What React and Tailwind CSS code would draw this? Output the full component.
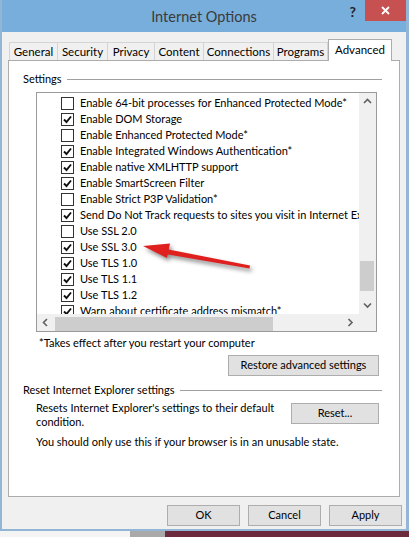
import React from 'react'

const rows = [
  [false, 'Enable 64-bit processes for Enhanced Protected Mode*'],
  [true, 'Enable DOM Storage'],
  [false, 'Enable Enhanced Protected Mode*'],
  [true, 'Enable Integrated Windows Authentication*'],
  [true, 'Enable native XMLHTTP support'],
  [true, 'Enable SmartScreen Filter'],
  [false, 'Enable Strict P3P Validation*'],
  [true, 'Send Do Not Track requests to sites you visit in Internet Explorer*'],
  [false, 'Use SSL 2.0'],
  [true, 'Use SSL 3.0'],
  [true, 'Use TLS 1.0'],
  [true, 'Use TLS 1.1'],
  [true, 'Use TLS 1.2'],
  [true, 'Warn about certificate address mismatch*'],
]

const tabs = ['General', 'Security', 'Privacy', 'Content', 'Connections', 'Programs']
const tabWidths = ['w-[49px]', 'w-[51px]', 'w-[48px]', 'w-[50px]', 'w-[71px]', 'w-[55px]']

function Chevron({ dir }) {
  const d = {
    up: 'M1 5 L4.5 1.5 L8 5',
    down: 'M1 1.5 L4.5 5 L8 1.5',
    left: 'M5 1 L1.5 4.5 L5 8',
    right: 'M1.5 1 L5 4.5 L1.5 8',
  }[dir]
  const vert = dir === 'up' || dir === 'down'
  return (
    <svg width={vert ? 9 : 7} height={vert ? 7 : 9} viewBox={vert ? '0 0 9 7' : '0 0 7 9'}>
      <path d={d} fill="none" stroke="#606060" strokeWidth="1.6" />
    </svg>
  )
}

function Check({ on }) {
  return (
    <div className="w-[13px] h-[13px] border border-[#333] bg-white flex items-center justify-center shrink-0">
      {on && (
        <svg width="9" height="9" viewBox="0 0 9 9">
          <path d="M1 4.5 L3.5 7 L8 1.5" fill="none" stroke="#111" strokeWidth="1.9" />
        </svg>
      )}
    </div>
  )
}

function Btn({ children, className = '' }) {
  return (
    <div className={`h-[21px] flex items-center justify-center border border-[#adadad] bg-[#e1e1e1] text-black ${className}`}>
      {children}
    </div>
  )
}

export default function App() {
  return (
    <div className="relative w-[409px] h-[537px] overflow-hidden bg-[#f3f3f3] font-['Lato',sans-serif] text-[11px] text-black">
      <div className="h-[531px] flex flex-col border-l-2 border-r-[3px] border-b-2 border-[#93b6d6] bg-[#f0f0f0]">
        {/* title bar */}
        <div className="h-[32px] shrink-0 grid grid-cols-[1fr_auto_1fr] bg-[#78aedb]">
          <div />
          <div className="text-[14.5px] leading-[32px] text-[#3a3a3a] pt-[1px]">Internet Options</div>
          <div className="flex justify-end items-start">
            <div className="mr-[9px] mt-[2px] text-[14px] font-bold text-[#222] leading-[20px]">?</div>
            <div className="w-[41px] h-[21px] bg-[#c75050] flex items-center justify-center">
              <svg width="9" height="9" viewBox="0 0 9 9">
                <path d="M1 1 L8 8 M8 1 L1 8" stroke="#fff" strokeWidth="1.8" />
              </svg>
            </div>
          </div>
        </div>

        {/* tabs */}
        <div className="h-[28px] shrink-0 flex items-end pl-[7px]">
          {tabs.map((t, i) => (
            <div
              key={t}
              className={`${tabWidths[i]} h-[18px] border border-b-0 border-[#d4d4d4] -ml-px first:ml-0 bg-[#f0f0f0] flex items-center justify-center leading-none text-[11.5px]`}
            >
              {t}
            </div>
          ))}
          <div className="relative z-10 w-[64px] h-[22px] -mb-px border border-b-0 border-[#acacac] bg-white flex items-start justify-center pt-[3px] leading-[14px] text-[11.5px]">
            Advanced
          </div>
        </div>

        {/* panel */}
        <div className="ml-[6px] w-[392px] h-[437px] border border-[#acacac] bg-white pl-[14px] pr-[17px] pt-[10px] flex flex-col">
          <div className="flex items-center h-[16px]">
            <span>Settings</span>
            <div className="flex-1 ml-[5px] h-px bg-[#a0a0a0]" />
          </div>

          {/* list box */}
          <div className="mt-[5px] ml-[13px] w-[341px] h-[240px] border border-[#9a9a9a] grid grid-cols-[1fr_17px] grid-rows-[1fr_17px]">
            <div className="overflow-hidden pt-[2px]">
              {rows.map(([on, label]) => (
                <div key={label} className="h-[16px] flex items-center pl-[24px] gap-[6px] whitespace-nowrap">
                  <Check on={on} />
                  <span className="leading-[16px]">{label}</span>
                </div>
              ))}
            </div>
            <div className="bg-[#f0f0f0] flex flex-col">
              <div className="h-[17px] flex items-center justify-center">
                <Chevron dir="up" />
              </div>
              <div className="flex-1">
                <div className="mt-[151px] ml-[1px] w-[14px] h-[30px] bg-[#cdcdcd]" />
              </div>
              <div className="h-[17px] flex items-center justify-center">
                <Chevron dir="down" />
              </div>
            </div>
            <div className="bg-[#f0f0f0] flex">
              <div className="w-[17px] flex items-center justify-center">
                <Chevron dir="left" />
              </div>
              <div className="flex-1 flex items-end">
                <div className="ml-[1px] w-[218px] h-[14px] bg-[#cdcdcd]" />
              </div>
              <div className="w-[17px] flex items-center justify-center">
                <Chevron dir="right" />
              </div>
            </div>
            <div className="bg-[#f0f0f0]" />
          </div>

          <div className="mt-[3px] ml-[16px] leading-[16px]">*Takes effect after you restart your computer</div>

          <div className="mt-[4px] flex justify-end pr-[3px]">
            <Btn className="w-[151px]">Restore advanced settings</Btn>
          </div>

          <div className="mt-[6px] flex items-center h-[16px]">
            <span>Reset Internet Explorer settings</span>
            <div className="flex-1 ml-[6px] h-px bg-[#a0a0a0]" />
          </div>

          <div className="mt-[3px] ml-[13px] flex justify-between pr-[3px]">
            <div className="leading-[14px] whitespace-nowrap">
              Resets Internet Explorer's settings to their default
              <br />
              condition.
            </div>
            <Btn className="w-[88px] mt-[2px]">Reset...</Btn>
          </div>

          <div className="mt-[5px] ml-[13px] leading-[16px]">You should only use this if your browser is in an unusable state.</div>
        </div>

        {/* dialog buttons */}
        <div className="mt-[8px] pl-[165px] flex gap-[8px]">
          <Btn className="w-[73px] border-[#3c7fb1]">OK</Btn>
          <Btn className="w-[73px]">Cancel</Btn>
          <Btn className="w-[73px]">Apply</Btn>
        </div>
      </div>

      {/* desktop strip under the window */}
      <div className="h-[6px] flex">
        <div className="w-[130px] bg-[#f4f4f4]" />
        <div className="w-[35px] bg-[#a9a9a9]" />
        <div className="flex-1 bg-[#6b2b3c]" />
      </div>

      {/* red annotation arrow */}
      <svg
        className="absolute left-0 top-0 pointer-events-none drop-shadow-[2px_3px_2px_rgba(0,0,0,0.45)]"
        width="409"
        height="537"
        viewBox="0 0 409 537"
      >
        <polygon points="143,246 170,243.5 167,258" fill="#e01f1f" />
        <polygon points="166,249 250,265.5 249.5,268.5 165,254" fill="#e01f1f" />
      </svg>
    </div>
  )
}
